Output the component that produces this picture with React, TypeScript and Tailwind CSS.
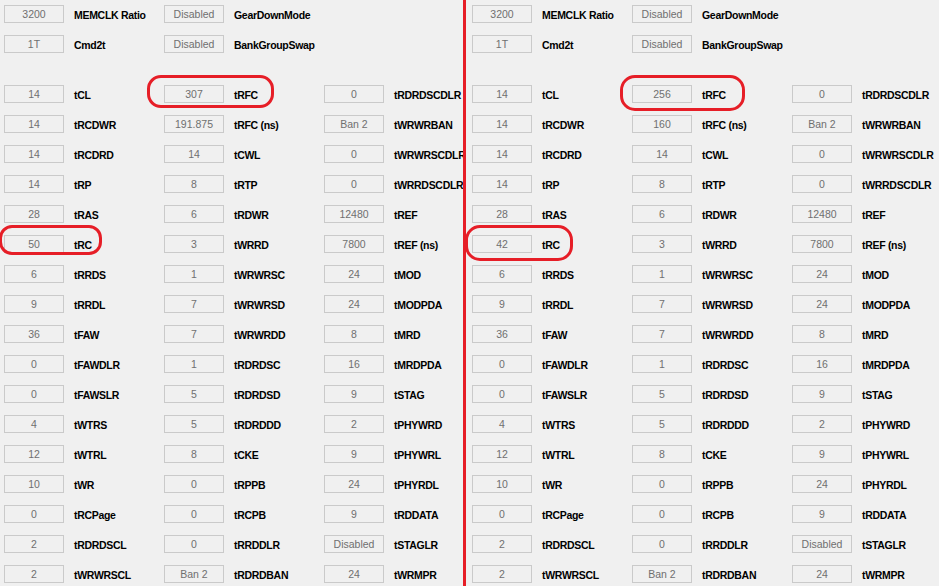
import React from "react";

type Cell = [string, string] | null;

const top: Cell[][] = [
  [["3200", "MEMCLK Ratio"], ["Disabled", "GearDownMode"], null],
  [["1T", "Cmd2t"], ["Disabled", "BankGroupSwap"], null],
];

function makeRows(trfc: string, trfcns: string, trc: string): Cell[][] {
  const c1: [string, string][] = [
    ["14", "tCL"], ["14", "tRCDWR"], ["14", "tRCDRD"], ["14", "tRP"], ["28", "tRAS"], [trc, "tRC"],
    ["6", "tRRDS"], ["9", "tRRDL"], ["36", "tFAW"], ["0", "tFAWDLR"], ["0", "tFAWSLR"], ["4", "tWTRS"],
    ["12", "tWTRL"], ["10", "tWR"], ["0", "tRCPage"], ["2", "tRDRDSCL"], ["2", "tWRWRSCL"],
  ];
  const c2: [string, string][] = [
    [trfc, "tRFC"], [trfcns, "tRFC (ns)"], ["14", "tCWL"], ["8", "tRTP"], ["6", "tRDWR"], ["3", "tWRRD"],
    ["1", "tWRWRSC"], ["7", "tWRWRSD"], ["7", "tWRWRDD"], ["1", "tRDRDSC"], ["5", "tRDRDSD"], ["5", "tRDRDDD"],
    ["8", "tCKE"], ["0", "tRPPB"], ["0", "tRCPB"], ["0", "tRRDDLR"], ["Ban 2", "tRDRDBAN"],
  ];
  const c3: [string, string][] = [
    ["0", "tRDRDSCDLR"], ["Ban 2", "tWRWRBAN"], ["0", "tWRWRSCDLR"], ["0", "tWRRDSCDLR"], ["12480", "tREF"],
    ["7800", "tREF (ns)"], ["24", "tMOD"], ["24", "tMODPDA"], ["8", "tMRD"], ["16", "tMRDPDA"], ["9", "tSTAG"],
    ["2", "tPHYWRD"], ["9", "tPHYWRL"], ["24", "tPHYRDL"], ["9", "tRDDATA"], ["Disabled", "tSTAGLR"], ["24", "tWRMPR"],
  ];
  return c1.map((c, i) => [c, c2[i], c3[i]]);
}

function Field({ cell }: { cell: Cell }) {
  if (!cell) return <div className="w-[160px] shrink-0" />;
  return (
    <div className="flex w-[160px] shrink-0 items-center">
      <div className="flex h-[18px] w-[60px] shrink-0 items-center justify-center border border-[#cacaca] bg-[#f0f0f0] text-[10.5px] leading-none text-[#6f6f6f]">
        {cell[0]}
      </div>
      <div className="ml-[10px] mt-[2px] whitespace-nowrap text-[10.5px] font-bold leading-none tracking-[-0.3px] text-black">
        {cell[1]}
      </div>
    </div>
  );
}

function Row({ cells }: { cells: Cell[] }) {
  return (
    <div className="flex h-[18px]">
      {cells.map((c, i) => (
        <Field key={i} cell={c} />
      ))}
    </div>
  );
}

function Panel({ rows }: { rows: Cell[][] }) {
  return (
    <div className="flex flex-col gap-[12px]">
      {top.map((r, i) => (
        <Row key={"t" + i} cells={r} />
      ))}
      <div className="h-[8px]" />
      {rows.map((r, i) => (
        <Row key={i} cells={r} />
      ))}
    </div>
  );
}

function Mark({ className }: { className: string }) {
  return <div className={"pointer-events-none absolute border-[3px] border-[#e61e27] " + className} />;
}

export default function App() {
  const left = makeRows("307", "191.875", "50");
  const right = makeRows("256", "160", "42");
  return (
    <div
      className="flex h-[586px] w-[939px] overflow-hidden bg-[#f0f0f0]"
      style={{ fontFamily: '"Liberation Sans", Arial, sans-serif' }}
    >
      <div className="relative w-[463px] shrink-0 overflow-hidden pl-[4px] pt-[5px]">
        <Panel rows={left} />
        <Mark className="left-[147px] top-[75px] h-[33px] w-[127px] rounded-[14px]" />
        <Mark className="left-[-1px] top-[225px] h-[30px] w-[103px] rounded-[13px]" />
      </div>
      <div className="w-[3px] shrink-0 bg-[#e61e27]" />
      <div className="relative flex-1 pl-[6px] pt-[5px]">
        <Panel rows={right} />
        <Mark className="left-[154px] top-[75px] h-[36px] w-[125px] rounded-[15px]" />
        <Mark className="left-[-1px] top-[225px] h-[36px] w-[108px] rounded-[15px]" />
      </div>
    </div>
  );
}
